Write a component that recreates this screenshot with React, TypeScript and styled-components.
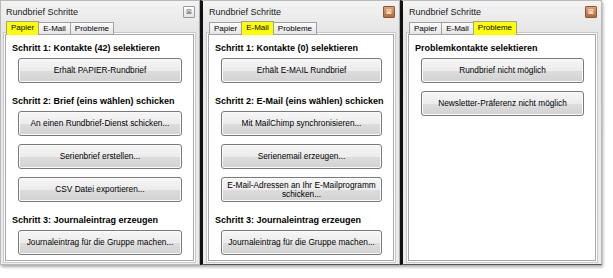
import styled, { createGlobalStyle, css } from "styled-components";

const GlobalStyle = createGlobalStyle`
  html, body {
    margin: 0;
    padding: 0;
    background: #ffffff;
  }
  body {
    font-family: "Liberation Sans", Arial, sans-serif;
    color: #000;
  }
`;

const Row = styled.div`
  display: flex;
  width: 613px;
  height: 278px;
  align-items: flex-start;
`;

interface IWindow {
  first?: boolean;
  w: number;
}

const Window = styled.div<IWindow>`
  width: ${(props) => props.w}px;
  height: 265px;
  flex-shrink: 0;
  box-sizing: border-box;
  background: linear-gradient(#f3f3f3, #e6e6e6 30px, #ececec);
  border: 1px solid #b9b9b9;
  box-shadow: 1px 2px 3px rgba(0, 0, 0, 0.35);
  display: flex;
  flex-direction: column;
  padding: 0 4px 3px 3px;
  ${(props) =>
    !props.first &&
    css`
      border-left: 3px solid #111;
      border-bottom: 1px solid #555;
      padding-left: 4px;
    `}
`;

const TitleBar = styled.div`
  height: 21px;
  flex-shrink: 0;
  display: flex;
  align-items: center;
  justify-content: space-between;
  font-size: 9px;
  color: #1a1a1a;
  padding: 0 0 0 2px;
`;

interface IClose {
  hot?: boolean;
}

const CloseBox = styled.div<IClose>`
  width: 12px;
  height: 12px;
  box-sizing: border-box;
  border: 1px solid ${(props) => (props.hot ? "#8a5a2e" : "#9a9a9a")};
  border-radius: 1px;
  background: ${(props) =>
    props.hot
      ? "linear-gradient(#e0a274, #b56a38)"
      : "linear-gradient(#ffffff, #e4e4e4)"};
  display: flex;
  align-items: center;
  justify-content: center;
  font-size: 7px;
  line-height: 1;
  color: ${(props) => (props.hot ? "#fff" : "#666")};
`;

const Tabs = styled.div`
  display: flex;
  flex-shrink: 0;
  height: 13px;
  padding-left: 2px;
  position: relative;
  z-index: 1;
`;

interface ITab {
  active?: boolean;
}

const Tab = styled.div<ITab>`
  box-sizing: border-box;
  height: ${(props) => (props.active ? "14px" : "13px")};
  margin-top: ${(props) => (props.active ? "-1px" : "0")};
  padding: 1px 4px 0 4px;
  font-size: 8px;
  border: 1px solid #a0a0a0;
  border-bottom: ${(props) => (props.active ? "none" : "1px solid #a0a0a0")};
  margin-right: -1px;
  background: ${(props) =>
    props.active ? "#ffff00" : "linear-gradient(#fbfbfb, #e5e5e5)"};
`;

const Page = styled.div`
  flex: 1;
  min-height: 0;
  background: #fff;
  border: 1px solid #a7a7a7;
  margin-top: -1px;
  outline: 1px solid #ffffff;
  box-shadow: 0 0 0 2px #c8c8c8;
  margin-left: 1px;
  margin-right: 1px;
  padding: 6px 6px 0 6px;
  display: flex;
  flex-direction: column;
  gap: 11px;
`;

const Step = styled.div`
  flex-shrink: 0;
`;

const Heading = styled.div`
  font-size: 9px;
  font-weight: bold;
  line-height: 11px;
  margin: 2px 0 4px 0;
  white-space: nowrap;
`;

const Buttons = styled.div`
  display: flex;
  flex-direction: column;
  gap: 8px;
  padding: 0 5px 0 6px;
`;

const Button = styled.div`
  height: 25px;
  box-sizing: border-box;
  border: 1px solid #7a7a7a;
  border-radius: 3px;
  background: linear-gradient(#f6f6f6, #ececec 50%, #dddddd 51%, #d2d2d2);
  box-shadow: inset 0 0 0 1px #fbfbfb;
  display: flex;
  align-items: center;
  justify-content: center;
  text-align: center;
  font-size: 8.3px;
  line-height: 9px;
  padding: 0 2px;
  white-space: pre-line;
`;

interface IStep {
  title: string;
  buttons: string[];
}

interface IPanel {
  active: number;
  hot?: boolean;
  first?: boolean;
  w: number;
  steps: IStep[];
}

const TAB_NAMES = ["Papier", "E-Mail", "Probleme"];

function Panel({ active, hot, first, w, steps }: IPanel) {
  return (
    <Window first={first} w={w}>
      <TitleBar>
        <span>Rundbrief Schritte</span>
        <CloseBox hot={hot}>⊠</CloseBox>
      </TitleBar>
      <Tabs>
        {TAB_NAMES.map((name, i) => (
          <Tab key={name} active={i === active}>
            {name}
          </Tab>
        ))}
      </Tabs>
      <Page>
        {steps.map((step) => (
          <Step key={step.title}>
            <Heading>{step.title}</Heading>
            <Buttons>
              {step.buttons.map((b) => (
                <Button key={b}>{b}</Button>
              ))}
            </Buttons>
          </Step>
        ))}
      </Page>
    </Window>
  );
}

const PAPIER: IStep[] = [
  {
    title: "Schritt 1: Kontakte (42) selektieren",
    buttons: ["Erhält PAPIER-Rundbrief"],
  },
  {
    title: "Schritt 2: Brief (eins wählen) schicken",
    buttons: [
      "An einen Rundbrief-Dienst schicken...",
      "Serienbrief erstellen...",
      "CSV Datei exportieren...",
    ],
  },
  {
    title: "Schritt 3: Journaleintrag erzeugen",
    buttons: ["Journaleintrag für die Gruppe machen..."],
  },
];

const EMAIL: IStep[] = [
  {
    title: "Schritt 1: Kontakte (0) selektieren",
    buttons: ["Erhält E-MAIL Rundbrief"],
  },
  {
    title: "Schritt 2: E-Mail (eins wählen) schicken",
    buttons: [
      "Mit MailChimp synchronisieren...",
      "Serienemail erzeugen...",
      "E-Mail-Adressen an Ihr E-Mailprogramm\nschicken...",
    ],
  },
  {
    title: "Schritt 3: Journaleintrag erzeugen",
    buttons: ["Journaleintrag für die Gruppe machen..."],
  },
];

const PROBLEME: IStep[] = [
  {
    title: "Problemkontakte selektieren",
    buttons: ["Rundbrief nicht möglich", "Newsletter-Präferenz nicht möglich"],
  },
];

export default function App() {
  return (
    <>
      <GlobalStyle />
      <Row>
        <Panel first w={200} active={0} steps={PAPIER} />
        <Panel w={200} active={1} hot steps={EMAIL} />
        <Panel w={202} active={2} hot steps={PROBLEME} />
      </Row>
    </>
  );
}
